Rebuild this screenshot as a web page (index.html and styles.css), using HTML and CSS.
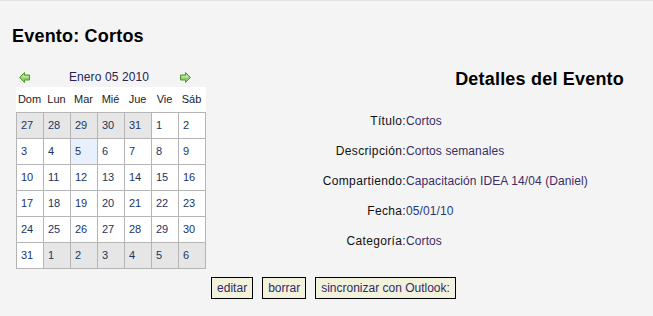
FILE: index.html
```html
<!DOCTYPE html>
<html lang="es">
<head>
  <meta charset="UTF-8">
  <meta name="viewport" content="width=device-width, initial-scale=1.0">
  <title>Evento: Cortos</title>
  <link rel="stylesheet" href="styles.css">
</head>
<body>
  <h1 class="page-title">Evento: Cortos</h1>

  <div class="event">
    <div class="calendar">
      <div class="cal-nav">
        <svg class="arrow" width="11" height="11" viewBox="0 0 11 11">
          <polygon points="0.5,5.5 5.5,0.5 5.5,3 10.5,3 10.5,8 5.5,8 5.5,10.5" fill="#8fce6b" stroke="#4e9a2c"/>
          <polygon points="2,5.5 5,2.5 5,4 9.5,4 9.5,5.5" fill="#c2e8a6"/>
        </svg>
        <span class="cal-month">Enero 05 2010</span>
        <svg class="arrow" width="11" height="11" viewBox="0 0 11 11">
          <polygon points="10.5,5.5 5.5,0.5 5.5,3 0.5,3 0.5,8 5.5,8 5.5,10.5" fill="#8fce6b" stroke="#4e9a2c"/>
          <polygon points="9,5.5 6,2.5 6,4 1.5,4 1.5,5.5" fill="#c2e8a6"/>
        </svg>
      </div>
      <div class="cal-head">
        <span>Dom</span><span>Lun</span><span>Mar</span><span>Mié</span><span>Jue</span><span>Vie</span><span>Sáb</span>
      </div>
      <div class="cal-grid">
        <span class="other">27</span><span class="other">28</span><span class="other">29</span><span class="other">30</span><span class="other">31</span><span>1</span><span>2</span>
        <span>3</span><span>4</span><span class="today">5</span><span>6</span><span>7</span><span>8</span><span>9</span>
        <span>10</span><span>11</span><span>12</span><span>13</span><span>14</span><span>15</span><span>16</span>
        <span>17</span><span>18</span><span>19</span><span>20</span><span>21</span><span>22</span><span>23</span>
        <span>24</span><span>25</span><span>26</span><span>27</span><span>28</span><span>29</span><span>30</span>
        <span>31</span><span class="other">1</span><span class="other">2</span><span class="other">3</span><span class="other">4</span><span class="other">5</span><span class="other">6</span>
      </div>
    </div>

    <div class="details">
      <h2 class="details-title">Detalles del Evento</h2>
      <div class="detail-rows">
        <span class="label">Título:</span><span class="value">Cortos</span>
        <span class="label">Descripción:</span><span class="value">Cortos semanales</span>
        <span class="label">Compartiendo:</span><span class="value">Capacitación IDEA 14/04 (Daniel)</span>
        <span class="label">Fecha:</span><span class="value date">05/01/10</span>
        <span class="label">Categoría:</span><span class="value">Cortos</span>
      </div>
    </div>
  </div>

  <div class="actions">
    <button>editar</button>
    <button>borrar</button>
    <button>sincronizar con Outlook:</button>
  </div>
</body>
</html>
```

FILE: styles.css
```css
body {
    margin: 0;
    background-color: #f4f4f4;
    border-top: 1px solid #e4e4e4;
    font-family: "Liberation Sans", Arial, sans-serif;
    font-size: 12px;
    color: #111111;
}

.page-title {
    margin: 0;
    padding: 25px 12px 0;
    font-size: 18px;
    letter-spacing: 0.2px;
    line-height: 20px;
    font-weight: bold;
    color: #000000;
}

.event {
    display: flex;
    margin-top: 21px;
    padding: 0 29px 0 16px;
}

.calendar {
    width: 190px;
}

.cal-nav {
    display: grid;
    grid-template-columns: 11px 1fr 11px;
    align-items: center;
    height: 20px;
    padding: 0 15px 0 3px;
}

.arrow {
    display: block;
}

.cal-month {
    text-align: center;
    padding-left: 8px;
    letter-spacing: 0.1px;
    color: #2a2250;
}

.cal-head {
    display: grid;
    grid-template-columns: repeat(7, 27px);
    height: 25px;
    line-height: 25px;
    background-color: #ffffff;
    font-size: 11px;
    color: #222222;
    text-align: center;
}

.cal-grid {
    display: grid;
    grid-template-columns: repeat(7, 26px);
    grid-auto-rows: 25px;
    gap: 1px;
    padding: 1px;
    background-color: #b5b5b5;
}

.cal-grid span {
    background-color: #ffffff;
    padding-left: 4px;
    line-height: 25px;
    font-size: 11px;
    color: #1a3563;
}

.cal-grid .other {
    background-color: #e6e6e6;
}

.cal-grid .today {
    background-color: #e8f0fd;
}

.details {
    flex: 1;
}

.details-title {
    margin: 0;
    text-align: right;
    font-size: 18px;
    letter-spacing: 0.2px;
    line-height: 24px;
    font-weight: bold;
    color: #000000;
}

.detail-rows {
    display: grid;
    grid-template-columns: 200px 1fr;
    grid-auto-rows: 30px;
    align-items: center;
    margin-top: 15px;
}

.label {
    text-align: right;
    letter-spacing: 0.35px;
    color: #111111;
}

.value {
    letter-spacing: 0.1px;
    color: #3a2d66;
}

.value.date {
    color: #1f3a7a;
}

.actions {
    display: flex;
    justify-content: center;
    gap: 9px;
    margin-top: 8px;
    padding-left: 14px;
}

button {
    margin: 0;
    padding: 3px 5px;
    border: 1px solid #000000;
    border-radius: 0;
    background-color: #f1f1dc;
    font-family: "Liberation Sans", Arial, sans-serif;
    font-size: 12px;
    line-height: 14px;
    color: #2f2a6a;
}
```
